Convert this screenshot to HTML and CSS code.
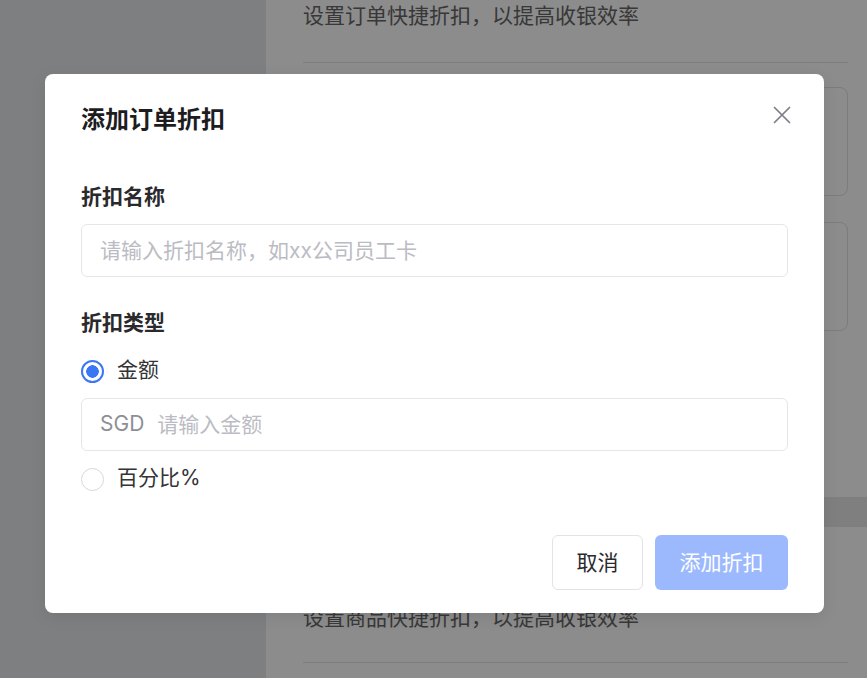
FILE: index.html
```html
<!DOCTYPE html>
<html lang="zh-CN">
<head>
<meta charset="utf-8">
<title>添加订单折扣</title>
<link rel="stylesheet" href="styles.css">
</head>
<body>
<div class="page">
  <aside class="sidebar"></aside>
  <main class="main">
    <section class="section section-top">
      <p class="desc">设置订单快捷折扣，以提高收银效率</p>
      <div class="divider"></div>
      <div class="card card-first"></div>
      <div class="card card-second"></div>
    </section>
    <div class="band"></div>
    <section class="section section-bottom">
      <p class="desc">设置商品快捷折扣，以提高收银效率</p>
      <div class="divider divider-bottom"></div>
    </section>
  </main>
</div>
<div class="overlay"></div>
<div class="modal" role="dialog">
  <div class="modal-head">
    <h2 class="modal-title">添加订单折扣</h2>
    <button class="close" aria-label="关闭">
      <svg width="18" height="18" viewBox="0 0 18 18"><path d="M1.5 1.5 L16.5 16.5 M16.5 1.5 L1.5 16.5" stroke="#7b7e87" stroke-width="1.7" stroke-linecap="round" fill="none"/></svg>
    </button>
  </div>
  <div class="field field-name">
    <div class="label">折扣名称</div>
    <div class="input"><span class="placeholder">请输入折扣名称，如xx公司员工卡</span></div>
  </div>
  <div class="field field-type">
    <div class="label">折扣类型</div>
    <div class="radio-row radio-first"><span class="radio checked"></span><span class="radio-text">金额</span></div>
    <div class="input input-amount"><span class="prefix">SGD</span><span class="placeholder">请输入金额</span></div>
    <div class="radio-row radio-second"><span class="radio"></span><span class="radio-text">百分比%</span></div>
  </div>
  <div class="actions">
    <button class="btn btn-cancel">取消</button>
    <button class="btn btn-primary">添加折扣</button>
  </div>
</div>
</body>
</html>
```
FILE: styles.css
```css
* { box-sizing: border-box; }
html, body { margin: 0; padding: 0; }
body {
  width: 867px;
  height: 678px;
  overflow: hidden;
  font-family: "Inter", "Noto Sans CJK SC", sans-serif;
  background: #ffffff;
  position: relative;
}
.page {
  display: flex;
  height: 678px;
}
.sidebar {
  width: 266px;
  flex: none;
  background: #e6e8ec;
}
.main {
  flex: 1;
  display: flex;
  flex-direction: column;
  background: #ffffff;
}
.section {
  padding: 0 19px 0 37px;
}
.section-top {
  padding-top: 1px;
  height: 497px;
}
.desc {
  margin: 0;
  font-size: 21px;
  line-height: 30px;
  color: #666;
}
.divider {
  height: 1px;
  background: #e2e2e2;
  margin-top: 31px;
}
.card {
  height: 109px;
  border: 1px solid #e2e2e2;
  border-radius: 8px;
}
.card-first { margin-top: 24px; }
.card-second { margin-top: 26px; }
.band {
  height: 30px;
  background: #e8e8e8;
}
.section-bottom {
  padding-top: 76px;
}
.divider-bottom { margin-top: 29px; }

.overlay {
  position: absolute;
  inset: 0;
  background: rgba(0, 0, 0, 0.45);
}
.modal {
  position: absolute;
  left: 45px;
  top: 74px;
  width: 779px;
  height: 539px;
  background: #ffffff;
  border-radius: 8px;
  padding: 30px 36px 23px;
  display: flex;
  flex-direction: column;
  box-shadow: 0 4px 16px rgba(0, 0, 0, 0.08);
}
.modal-head {
  display: flex;
  align-items: center;
  justify-content: space-between;
  height: 32px;
}
.modal-title {
  margin: 0;
  font-size: 24px;
  line-height: 32px;
  font-weight: 700;
  color: #1d1d1f;
}
.close {
  border: 0;
  background: none;
  padding: 0;
  width: 18px;
  height: 18px;
  margin: -10px -3px 0 0;
  display: flex;
}
.field { display: flex; flex-direction: column; }
.field-name { margin-top: 46px; }
.field-type { margin-top: 31px; }
.label {
  font-size: 21px;
  line-height: 30px;
  font-weight: 600;
  color: #2a2a2c;
}
.input {
  margin-top: 12px;
  height: 53px;
  border: 1.5px solid #e5e6ec;
  border-radius: 6px;
  display: flex;
  align-items: center;
  padding: 0 18px 3px;
  font-size: 21px;
}
.placeholder { color: #bbbcc3; }
.prefix { color: #8d8e96; margin-right: 13px; }
.radio-row {
  display: flex;
  align-items: center;
  height: 30px;
  gap: 13px;
}
.radio-first { margin-top: 18px; }
.radio-second { margin-top: 13px; }
.radio {
  width: 23px;
  height: 23px;
  border-radius: 50%;
  border: 1.5px solid #d7d8de;
  background: #fff;
  flex: none;
}
.radio.checked {
  border: 2px solid #3b76f6;
  background: radial-gradient(circle, #3b76f6 0 6px, #ffffff 6.5px);
}
.radio-text {
  font-size: 21px;
  line-height: 28px;
  padding-bottom: 3px;
  color: #333336;
}
.actions {
  margin-top: 41px;
  display: flex;
  justify-content: flex-end;
  gap: 12px;
}
.btn {
  height: 55px;
  border-radius: 6px;
  font-family: "Inter", "Noto Sans CJK SC", sans-serif;
  font-size: 21px;
  padding: 0 0 4px;
}
.btn-cancel {
  width: 91px;
  background: #fff;
  border: 1.5px solid #e2e3e8;
  color: #2a2a2c;
}
.btn-primary {
  width: 133px;
  background: #9cb9fd;
  border: 0;
  color: #ffffff;
}
```
